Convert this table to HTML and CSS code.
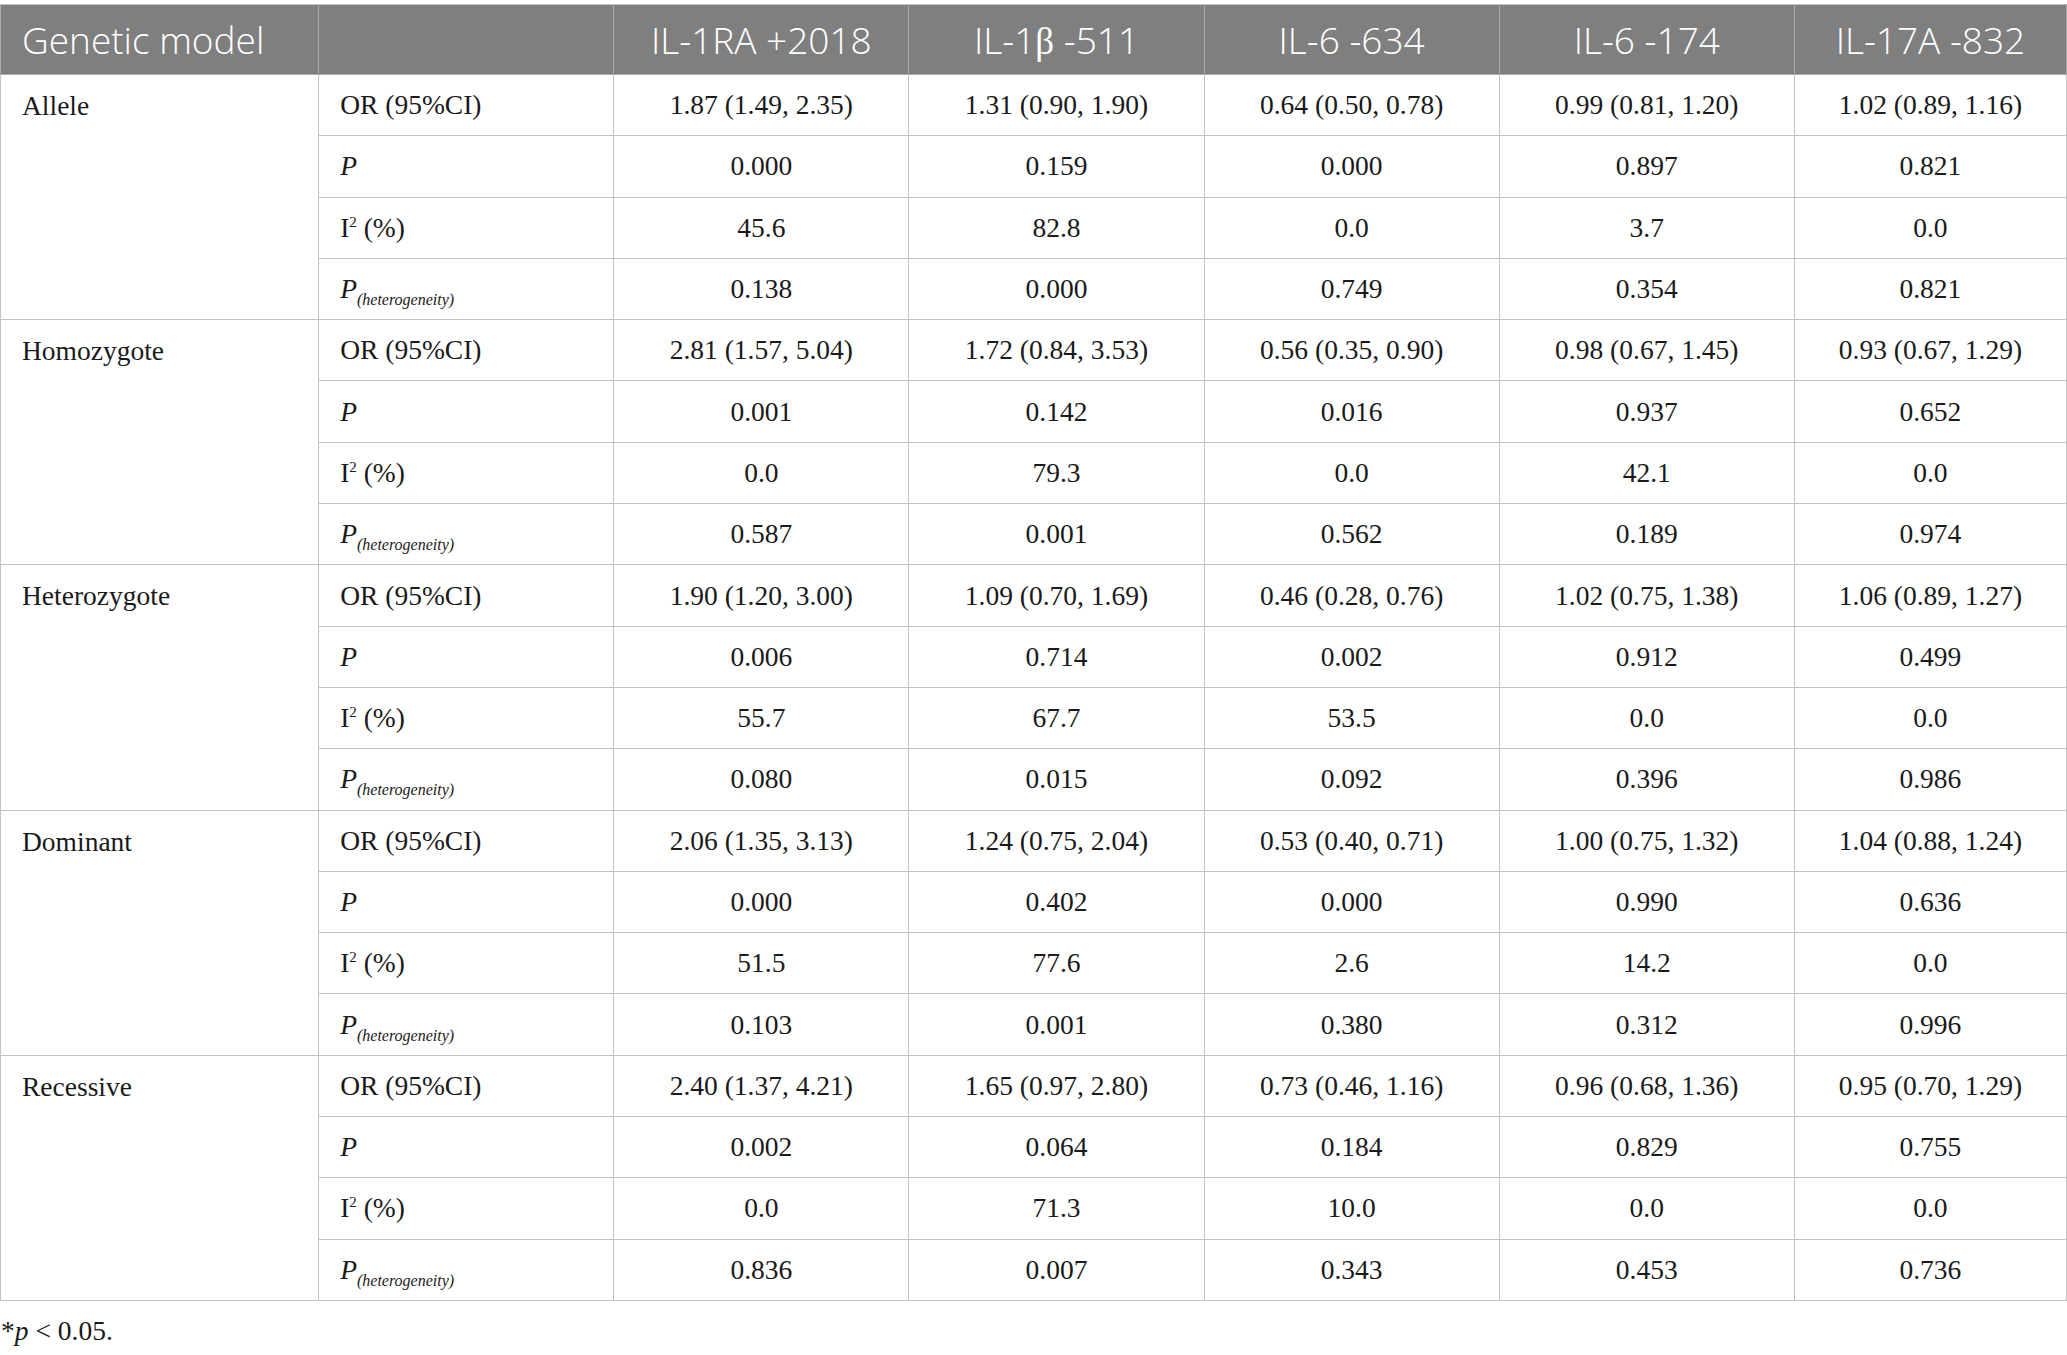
FILE: index.html
```html
<!DOCTYPE html>
<html>
<head>
  <title>Genetic model meta-analysis</title>
  <link rel="stylesheet" href="styles.css">
</head>
<body>

  <table class="results">
    <colgroup>
      <col class="c-model">
      <col class="c-stat">
      <col class="c-val">
      <col class="c-val">
      <col class="c-val">
      <col class="c-val">
      <col class="c-last">
    </colgroup>
    <thead>
      <tr>
        <th class="left">Genetic model</th>
        <th></th>
        <th>IL-1RA +2018</th>
        <th>IL-1<span class="beta">β</span> -511</th>
        <th>IL-6 -634</th>
        <th>IL-6 -174</th>
        <th>IL-17A -832</th>
      </tr>
    </thead>
    <tbody id="rows"></tbody>
  </table>

  <p class="note">*<i>p</i> &lt; 0.05.</p>

  <script>
    const data = [
      ["Allele", [
        ["1.87 (1.49, 2.35)", "1.31 (0.90, 1.90)", "0.64 (0.50, 0.78)", "0.99 (0.81, 1.20)", "1.02 (0.89, 1.16)"],
        ["0.000", "0.159", "0.000", "0.897", "0.821"],
        ["45.6", "82.8", "0.0", "3.7", "0.0"],
        ["0.138", "0.000", "0.749", "0.354", "0.821"]
      ]],
      ["Homozygote", [
        ["2.81 (1.57, 5.04)", "1.72 (0.84, 3.53)", "0.56 (0.35, 0.90)", "0.98 (0.67, 1.45)", "0.93 (0.67, 1.29)"],
        ["0.001", "0.142", "0.016", "0.937", "0.652"],
        ["0.0", "79.3", "0.0", "42.1", "0.0"],
        ["0.587", "0.001", "0.562", "0.189", "0.974"]
      ]],
      ["Heterozygote", [
        ["1.90 (1.20, 3.00)", "1.09 (0.70, 1.69)", "0.46 (0.28, 0.76)", "1.02 (0.75, 1.38)", "1.06 (0.89, 1.27)"],
        ["0.006", "0.714", "0.002", "0.912", "0.499"],
        ["55.7", "67.7", "53.5", "0.0", "0.0"],
        ["0.080", "0.015", "0.092", "0.396", "0.986"]
      ]],
      ["Dominant", [
        ["2.06 (1.35, 3.13)", "1.24 (0.75, 2.04)", "0.53 (0.40, 0.71)", "1.00 (0.75, 1.32)", "1.04 (0.88, 1.24)"],
        ["0.000", "0.402", "0.000", "0.990", "0.636"],
        ["51.5", "77.6", "2.6", "14.2", "0.0"],
        ["0.103", "0.001", "0.380", "0.312", "0.996"]
      ]],
      ["Recessive", [
        ["2.40 (1.37, 4.21)", "1.65 (0.97, 2.80)", "0.73 (0.46, 1.16)", "0.96 (0.68, 1.36)", "0.95 (0.70, 1.29)"],
        ["0.002", "0.064", "0.184", "0.829", "0.755"],
        ["0.0", "71.3", "10.0", "0.0", "0.0"],
        ["0.836", "0.007", "0.343", "0.453", "0.736"]
      ]]
    ];

    const labels = [
      "OR (95%CI)",
      "<i>P</i>",
      "I<sup>2</sup> (%)",
      "<i>P</i><sub>(heterogeneity)</sub>"
    ];

    const body = document.getElementById("rows");

    data.forEach(([model, stats]) => {
      stats.forEach((vals, i) => {
        const row = document.createElement("tr");
        let html = "";
        if (i === 0) html += `<td class="model" rowspan="4">${model}</td>`;
        html += `<td class="stat">${labels[i]}</td>`;
        vals.forEach(v => html += `<td>${v}</td>`);
        row.innerHTML = html;
        body.appendChild(row);
      });
    });
  </script>

</body>
</html>
```

FILE: styles.css
```css
/* Results table */
body {
  margin: 0;
  padding-top: 4px;
  background: #fff;
  color: #1a1a1a;
  font-family: "Liberation Serif", "Times New Roman", serif;
}

.results {
  width: 2067px;
  table-layout: fixed;
  border-collapse: collapse;
  font-size: 27.5px;
}

.c-model { width: 318px; }
.c-stat { width: 295px; }
.c-val { width: 295px; }
.c-last { width: 272px; }

.results th {
  background: #7f7f7f;
  color: #fff;
  font-family: "Open Sans", "Noto Sans", sans-serif;
  font-weight: 300;
  font-size: 37px;
  height: 69px;
  padding: 0 10px;
  text-align: center;
  border: 1px solid #a9a9a9;
  border-top-color: #c4c4c4;
}
.results th.left {
  text-align: left;
  padding-left: 21px;
}
.beta {
  font-family: "Liberation Serif", serif;
}

.results td {
  height: 60.3px;
  padding: 0 10px;
  border: 1px solid #c3c3c3;
  text-align: center;
  vertical-align: middle;
}
.results td.model {
  text-align: left;
  vertical-align: top;
  padding: 15px 21px 0;
}
.results td.stat {
  text-align: left;
  padding-left: 21px;
}

.results sup {
  font-size: 15px;
  vertical-align: 10px;
  line-height: 0;
}
.results sub {
  font-size: 16px;
  font-style: italic;
  vertical-align: -7px;
  line-height: 0;
}

.note {
  margin: 14px 0 0;
  padding-left: 1px;
  font-size: 27.5px;
}
```
